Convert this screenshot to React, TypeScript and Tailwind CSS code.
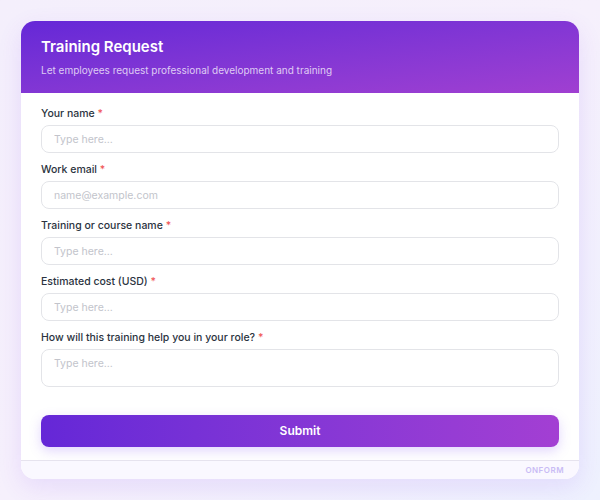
import React from 'react';

const fields = [
  { label: 'Your name', placeholder: 'Type here...' },
  { label: 'Work email', placeholder: 'name@example.com' },
  { label: 'Training or course name', placeholder: 'Type here...' },
  { label: 'Estimated cost (USD)', placeholder: 'Type here...' },
];

const App = () => {
  return (
    <div
      className="w-[600px] h-[500px] bg-gradient-to-br from-[#f4effc] via-[#f6f0fc] to-[#eef1fe] p-[21px]"
      style={{ fontFamily: 'Inter, "Noto Sans", sans-serif' }}
    >
      <div className="h-[458px] bg-white rounded-[14px] overflow-hidden flex flex-col shadow-[0_8px_24px_rgba(124,58,237,0.12)]">
        {/* Header */}
        <div className="h-[72px] shrink-0 bg-gradient-to-br from-[#6527d7] to-[#a03fd1] px-5 pt-[16px]">
          <h1 className="text-[15px] leading-5 font-semibold text-white">Training Request</h1>
          <p className="mt-[6px] text-[10px] leading-[14px] text-white/75">
            Let employees request professional development and training
          </p>
        </div>

        {/* Body */}
        <div className="flex-1 px-5 pt-3 flex flex-col">
          <div className="flex flex-col gap-2">
            {fields.map((f) => (
              <div key={f.label} className="flex flex-col gap-[2px]">
                <label className="text-[10.5px] leading-[18px] font-medium text-[#2b3340]">
                  {f.label} <span className="text-[#f05a5a]">*</span>
                </label>
                <input
                  className="h-[28px] rounded-lg border-[1.5px] border-[#e3e4e8] px-3 text-[10.5px] placeholder:text-[#c2c4cb] outline-none"
                  placeholder={f.placeholder}
                />
              </div>
            ))}
            <div className="flex flex-col gap-[2px]">
              <label className="text-[10.5px] leading-[18px] font-medium text-[#2b3340]">
                How will this training help you in your role? <span className="text-[#f05a5a]">*</span>
              </label>
              <textarea
                className="h-[38px] resize-none rounded-lg border-[1.5px] border-[#e3e4e8] px-3 py-[6px] text-[10.5px] leading-4 placeholder:text-[#c2c4cb] outline-none"
                placeholder="Type here..."
              />
            </div>
          </div>
          <button className="mt-[28px] h-[32px] rounded-lg bg-gradient-to-r from-[#6527d7] to-[#a33fd3] text-white text-[12px] font-semibold shadow-[0_4px_12px_rgba(139,92,246,0.25)]">
            Submit
          </button>
        </div>

        {/* Footer */}
        <div className="h-[19px] shrink-0 border-t border-[#e6e3ee] bg-[#faf8ff] flex items-center justify-end px-[15px]">
          <span className="text-[8px] font-semibold tracking-[0.06em] text-[#c9bcf5]">ONFORM</span>
        </div>
      </div>
    </div>
  );
};

export default App;
